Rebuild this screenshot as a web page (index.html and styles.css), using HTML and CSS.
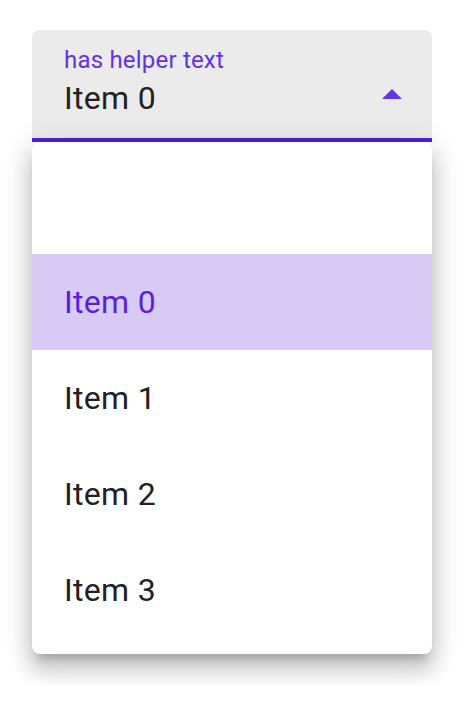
FILE: index.html
```html
<!DOCTYPE html>
<html>
<head>
<title>Select</title>
<link rel="stylesheet" href="styles.css">
</head>
<body>
<div class="select">
  <div class="select-anchor">
    <span class="select-label">has helper text</span>
    <div class="select-row">
      <span class="select-value">Item 0</span>
      <svg class="select-arrow" width="20" height="10" viewBox="0 0 20 10">
        <polygon points="0,10 10,0 20,10" fill="#6236e3"/>
      </svg>
    </div>
  </div>
  <ul class="select-menu">
    <li class="menu-item"></li>
    <li class="menu-item selected">Item 0</li>
    <li class="menu-item">Item 1</li>
    <li class="menu-item">Item 2</li>
    <li class="menu-item">Item 3</li>
  </ul>
</div>
</body>
</html>
```

FILE: styles.css
```css
body {
  margin: 0;
  background-color: white;
  font-family: Roboto, "Noto Sans", sans-serif;
  color: #212121;
}

.select {
  width: 400px;
  margin: 30px 32px;
}

.select-anchor {
  box-sizing: border-box;
  height: 112px;
  display: flex;
  flex-direction: column;
  gap: 10px;
  padding: 18px 30px 0 32px;
  background-color: #ebebeb;
  border-radius: 8px 8px 0 0;
  border-bottom: 4px solid #5020d8;
}

.select-label {
  font-size: 24px;
  line-height: 24px;
  color: #6232e4;
  letter-spacing: 0.2px;
}

.select-row {
  display: flex;
  align-items: center;
  justify-content: space-between;
}

.select-value {
  font-size: 32px;
  line-height: 32px;
  letter-spacing: 0.3px;
}

.select-arrow {
  margin-bottom: 8px;
}

.select-menu {
  list-style: none;
  margin: 0;
  padding: 16px 0;
  background-color: white;
  border-radius: 8px;
  box-shadow: 0 10px 10px -6px rgba(0, 0, 0, 0.2), 0 16px 20px 2px rgba(0, 0, 0, 0.14), 0 6px 28px 5px rgba(0, 0, 0, 0.12);
}

.menu-item {
  height: 96px;
  display: flex;
  align-items: center;
  padding: 0 32px;
  font-size: 32px;
  letter-spacing: 0.3px;
}

.menu-item.selected {
  background-color: #d7cbf6;
  color: #5a1ee0;
}
```
